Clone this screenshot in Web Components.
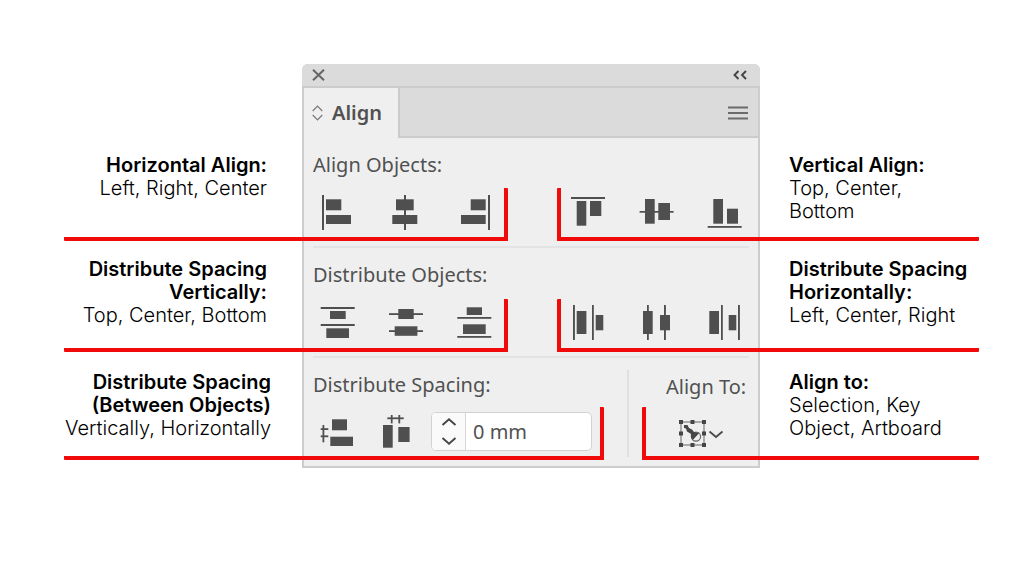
<!DOCTYPE html>
<html lang="en">
<head>
<meta charset="utf-8">
<title>Align panel guide</title>
<style>
  body { margin: 0; background: #fff; }
</style>
</head>
<body>
<align-guide>
  <align-panel slot="panel"></align-panel>
  <call-out slot="left-1" side="left"><span slot="title">Horizontal Align:</span>Left, Right, Center</call-out>
  <call-out slot="right-1" side="right"><span slot="title">Vertical Align:</span>Top, Center,<br>Bottom</call-out>
  <call-out slot="left-2" side="left"><span slot="title">Distribute Spacing<br>Vertically:</span>Top, Center, Bottom</call-out>
  <call-out slot="right-2" side="right"><span slot="title">Distribute Spacing<br>Horizontally:</span>Left, Center, Right</call-out>
  <call-out slot="left-3" side="left"><span slot="title">Distribute Spacing<br>(Between Objects)</span>Vertically, Horizontally</call-out>
  <call-out slot="right-3" side="right"><span slot="title">Align to:</span>Selection, Key<br>Object, Artboard</call-out>
</align-guide>

<script>
const rect = (x, y, w, h) => `<rect x="${x}" y="${y}" width="${w}" height="${h}"/>`;
const ICONS = {
  'h-left':   rect(2,1,2,35) + rect(6,5.3,15.3,11) + rect(6,21,25,9),
  'h-center': rect(16,1,2,35) + rect(8,5.3,17.7,11) + rect(4.3,21,25,9),
  'h-right':  rect(32,1,2,35) + rect(14.7,5.3,15,11) + rect(5,21,24.7,9),
  'v-top':    rect(1,3,34,2) + rect(6.7,7,9.6,24.7) + rect(20,7,11.3,15),
  'v-center': rect(1.6,17,34,1.7) + rect(7,5,9.7,24.7) + rect(20.3,9,11.7,17),
  'v-bottom': rect(1.7,32,34,1.8) + rect(7.3,5,9.7,24.7) + rect(21,14.7,11,15),
  'd-top':    rect(.7,3,34,2) + rect(10,7,15.7,8) + rect(.7,20,34,2) + rect(6.3,24.3,22.7,9.7),
  'd-middle': rect(1,9.2,34,1.8) + rect(10.3,5,15.4,10) + rect(1,26.2,34,1.8) + rect(6.7,22.3,22.7,9.5),
  'd-bottom': rect(10.7,3.3,15.3,7.7) + rect(1.3,13,34,1.8) + rect(7,20.3,22.7,9.7) + rect(1.3,32,34,1.8),
  'd-left':   rect(3,1,1.9,35) + rect(6.7,7,9.7,23) + rect(22,1,1.8,35) + rect(25.7,11,7.6,15.3),
  'd-center': rect(9,1,1.8,35) + rect(5,7,9.7,23) + rect(26,1,1.9,35) + rect(22,11,10,15.3),
  'd-right':  rect(3.3,7,9.7,23) + rect(15,1,1.8,35) + rect(22.7,11,7.6,15.3) + rect(32,1,1.9,35),
  's-vertical': rect(12,5.3,15,11) + rect(10.3,22.7,22.7,9.3) + rect(2.5,11,1.8,17.3) + rect(.7,14.2,7.6,1.8) + rect(.7,21.4,7.6,1.8),
  's-horizontal': rect(5,11,9.7,22.7) + rect(20.3,13,11.3,15) + rect(9.3,3.4,16.4,1.8) + rect(12.8,1,1.8,8.4) + rect(20.4,1,1.8,8.4),
};

class AlignIcon extends HTMLElement {
  constructor() { super(); this.attachShadow({ mode: 'open' }); }
  connectedCallback() {
    this.shadowRoot.innerHTML = `
      <style>
        :host { display: block; }
        button { display: block; width: 36px; height: 36px; padding: 0; border: 0; background: none; }
        svg { display: block; fill: #4f4f4f; }
      </style>
      <button type="button" aria-label="${this.getAttribute('label')}">
        <svg width="36" height="36" viewBox="0 0 36 36" aria-hidden="true">${ICONS[this.getAttribute('name')]}</svg>
      </button>`;
  }
}
customElements.define('align-icon', AlignIcon);

class PanelSection extends HTMLElement {
  constructor() {
    super();
    this.attachShadow({ mode: 'open' }).innerHTML = `
      <style>
        :host { display: block; padding: 15px 11px 0; }
        h3 { margin: 0 0 17px; font-size: inherit; font-weight: inherit; line-height: 24px; }
        .row { display: flex; justify-content: space-between; padding: 0 7px; }
        .rule { height: 2px; margin-top: 16px; background: #e2e3e4; }
      </style>
      <h3><slot name="label"></slot></h3>
      <div class="row"><slot></slot></div>
      <div class="rule"></div>`;
  }
}
customElements.define('panel-section', PanelSection);

class IconGroup extends HTMLElement {
  constructor() {
    super();
    this.attachShadow({ mode: 'open' }).innerHTML = `
      <style>:host { display: flex; gap: 32px; }</style><slot></slot>`;
  }
}
customElements.define('icon-group', IconGroup);

class SpacingField extends HTMLElement {
  constructor() {
    super();
    this.attachShadow({ mode: 'open' }).innerHTML = `
      <style>
        :host { display: flex; box-sizing: border-box; width: 161px; height: 39px; border: 1px solid #d2d2d2;
                border-radius: 5px; background: #fff; overflow: hidden; }
        .steps { display: flex; flex-direction: column; flex: none; width: 34px; box-sizing: border-box;
                 border-right: 1px solid #d6d6d6; background: #fafafa; }
        button { flex: 1; display: grid; place-items: center; padding: 0; border: 0; background: none; }
        svg { fill: none; stroke: #444; stroke-width: 1.9; }
        input { flex: 1; min-width: 0; padding: 0 0 0 7px; border: 0; outline: 0; background: none;
                font: inherit; color: #515151; }
      </style>
      <div class="steps">
        <button type="button" aria-label="Increase spacing"><svg width="16" height="8" viewBox="0 0 16 8"><path d="M1.5 7 8 1.3 14.5 7"/></svg></button>
        <button type="button" aria-label="Decrease spacing"><svg width="16" height="8" viewBox="0 0 16 8"><path d="M1.5 1 8 6.7 14.5 1"/></svg></button>
      </div>
      <input type="text" aria-label="Spacing" value="0 mm">`;
  }
}
customElements.define('spacing-field', SpacingField);

class TargetPicker extends HTMLElement {
  constructor() {
    super();
    const handles = [[0,0],[11.5,0],[23,0],[0,11.5],[23,11.5],[0,23],[11.5,23],[23,23]]
      .map(([x, y]) => rect(x, y, 4, 4)).join('');
    this.attachShadow({ mode: 'open' }).innerHTML = `
      <style>
        :host { display: block; }
        button { display: flex; align-items: center; gap: 2px; padding: 0; border: 0; background: none; }
        svg { display: block; }
      </style>
      <button type="button" aria-haspopup="menu" aria-label="Align to selection">
        <svg width="27" height="27" viewBox="0 0 27 27" fill="#454545">
          <rect x="2" y="2" width="23" height="23" fill="none" stroke="#858585" stroke-width="1.3"/>
          ${handles}
          <circle cx="17" cy="16.6" r="4.6" fill="#ececec" stroke="#666" stroke-width="1.2"/>
          <path d="M5 5H8.500L10 8 13 9.500 15 12 20.500 12.800 13.800 20 12 17 11.800 13.800 8 11.500 7 8.500 5 8z"/>
        </svg>
        <svg width="16" height="10" viewBox="0 0 16 10" fill="none" stroke="#4a4a4a" stroke-width="1.8"><path d="M1.5 2.500 8 8 14.500 2.500"/></svg>
      </button>`;
  }
}
customElements.define('target-picker', TargetPicker);

class AlignPanel extends HTMLElement {
  constructor() {
    super();
    this.attachShadow({ mode: 'open' }).innerHTML = `
      <style>
        :host { display: block; box-sizing: border-box; border-radius: 6px 6px 0 0; overflow: hidden;
                background: #efefef; color: #515151; font: 20px/24px "Noto Sans", sans-serif;
                box-shadow: inset 0 0 0 2px #cdcdcd; }
        button { padding: 0; border: 0; background: none; font: inherit; color: inherit; }
        svg { display: block; fill: none; }
        .title { display: flex; align-items: center; justify-content: space-between; height: 24px; box-sizing: border-box;
                 padding: 0 13px 0 10px; background: #dbdbdb; border-bottom: 2px solid #cbcbcb; }
        .tabs { display: flex; justify-content: space-between; height: 50px; margin: 0 2px; background: #dbdbdb; }
        .tab { display: flex; align-items: center; gap: 9px; width: 96px; padding-left: 8px;
               background: #efefef; font-weight: 600; border-right: 2px solid #cbcbcb; }
        .menu { flex: 1; display: flex; align-items: center; justify-content: flex-end; padding: 2px 10px 0 0;
                border-bottom: 2px solid #cbcbcb; }
        .bottom { display: flex; padding: 15px 10px 11px 11px; }
        .spacing { flex: 1; }
        .spacing > div { display: flex; margin-top: 15px; align-items: center; padding-left: 7px; }
        .spacing align-icon + align-icon { margin-left: 22px; }
        spacing-field { margin-left: 17px; }
        h3 { margin: 0; font-size: inherit; font-weight: inherit; line-height: 24px; }
        .target { width: 123px; box-sizing: border-box; margin-top: -3px; padding: 5px 0 10px 37px;
                  border-left: 2px solid #dfdfdf; }
        .target target-picker { margin: 21px 0 0 13px; }
      </style>
      <div class="title">
        <button type="button" aria-label="Close"><svg width="13" height="12" viewBox="0 0 13 12" stroke="#666" stroke-width="2"><path d="M1 .7 12 11.3M12 .7 1 11.3"/></svg></button>
        <button type="button" aria-label="Collapse"><svg width="14" height="10" viewBox="0 0 14 10" stroke="#444" stroke-width="1.9"><path d="M5.5 1 1.500 5 5.500 9M13 1 9 5 13 9"/></svg></button>
      </div>
      <div class="tabs" role="tablist">
        <button type="button" class="tab" role="tab" aria-selected="true">
          <svg width="11" height="16" viewBox="0 0 11 16" stroke="#777" stroke-width="1.2"><path d="M.7 6 5.500 1 10.300 6M.7 10 5.500 15 10.300 10"/></svg>
          Align
        </button>
        <div class="menu">
          <button type="button" aria-label="Panel menu"><svg width="20" height="14" viewBox="0 0 20 14" stroke="#6a6a6a" stroke-width="1.8"><path d="M0 1.500H20M0 7H20M0 12.500H20"/></svg></button>
        </div>
      </div>
      <panel-section>
        <span slot="label">Align Objects:</span>
        <icon-group>
          <align-icon name="h-left" label="Horizontal align left"></align-icon>
          <align-icon name="h-center" label="Horizontal align center"></align-icon>
          <align-icon name="h-right" label="Horizontal align right"></align-icon>
        </icon-group>
        <icon-group>
          <align-icon name="v-top" label="Vertical align top"></align-icon>
          <align-icon name="v-center" label="Vertical align center"></align-icon>
          <align-icon name="v-bottom" label="Vertical align bottom"></align-icon>
        </icon-group>
      </panel-section>
      <panel-section>
        <span slot="label">Distribute Objects:</span>
        <icon-group>
          <align-icon name="d-top" label="Distribute top"></align-icon>
          <align-icon name="d-middle" label="Distribute vertical center"></align-icon>
          <align-icon name="d-bottom" label="Distribute bottom"></align-icon>
        </icon-group>
        <icon-group>
          <align-icon name="d-left" label="Distribute left"></align-icon>
          <align-icon name="d-center" label="Distribute horizontal center"></align-icon>
          <align-icon name="d-right" label="Distribute right"></align-icon>
        </icon-group>
      </panel-section>
      <div class="bottom">
        <div class="spacing">
          <h3>Distribute Spacing:</h3>
          <div>
            <align-icon name="s-vertical" label="Distribute vertical space"></align-icon>
            <align-icon name="s-horizontal" label="Distribute horizontal space"></align-icon>
            <spacing-field></spacing-field>
          </div>
        </div>
        <div class="target">
          <h3>Align To:</h3>
          <target-picker></target-picker>
        </div>
      </div>`;
  }
}
customElements.define('align-panel', AlignPanel);

/* A caption whose red bracket reaches over the panel by --reach. */
class CallOut extends HTMLElement {
  constructor() {
    super();
    this.attachShadow({ mode: 'open' }).innerHTML = `
      <style>
        :host { display: block; position: relative; height: 100%; box-sizing: border-box; color: #000;
                font: 300 20px/23px Inter, sans-serif; white-space: nowrap; padding-top: var(--top); }
        :host([side="left"]) { text-align: right; padding-right: var(--inset, 35px); }
        :host([side="right"]) { padding-left: 29px; }
        strong { display: block; font-weight: 600; }
        .bracket { position: absolute; bottom: 0; height: 53px; box-sizing: border-box; pointer-events: none;
                   border: 0 solid #f00a0a; border-bottom-width: 4px; border-radius: 1px; }
        :host([side="left"]) .bracket { left: 0; right: calc(-1 * var(--reach)); border-right-width: 4px; }
        :host([side="right"]) .bracket { right: 0; left: calc(-1 * var(--reach)); border-left-width: 4px; }
      </style>
      <strong><slot name="title"></slot></strong>
      <slot></slot>
      <div class="bracket"></div>`;
  }
}
customElements.define('call-out', CallOut);

class AlignGuide extends HTMLElement {
  constructor() {
    super();
    this.attachShadow({ mode: 'open' }).innerHTML = `
      <style>
        :host { display: grid; padding: 64px 45px 64px 64px;
                grid-template-columns: minmax(0, 238fr) minmax(458px, auto) minmax(0, 219fr);
                grid-template-rows: minmax(177px, auto) minmax(111px, auto) minmax(108px, auto) auto; }
        .panel { grid-column: 2; grid-row: 1 / 5; }
        .left { grid-column: 1; }
        .right { grid-column: 3; }
        .r1 { grid-row: 1; --top: 90px; }
        .r2 { grid-row: 2; --top: 17px; }
        .r3 { grid-row: 3; --top: 19px; }
        .left { --reach: 206px; }
        .right { --reach: 203px; }
        .left.r3 { --reach: 302px; --inset: 31px; }
        .right.r3 { --reach: 118px; }
      </style>
      <div class="panel"><slot name="panel"></slot></div>
      <div class="left r1"><slot name="left-1"></slot></div>
      <div class="right r1"><slot name="right-1"></slot></div>
      <div class="left r2"><slot name="left-2"></slot></div>
      <div class="right r2"><slot name="right-2"></slot></div>
      <div class="left r3"><slot name="left-3"></slot></div>
      <div class="right r3"><slot name="right-3"></slot></div>`;
  }
}
customElements.define('align-guide', AlignGuide);
</script>
</body>
</html>
